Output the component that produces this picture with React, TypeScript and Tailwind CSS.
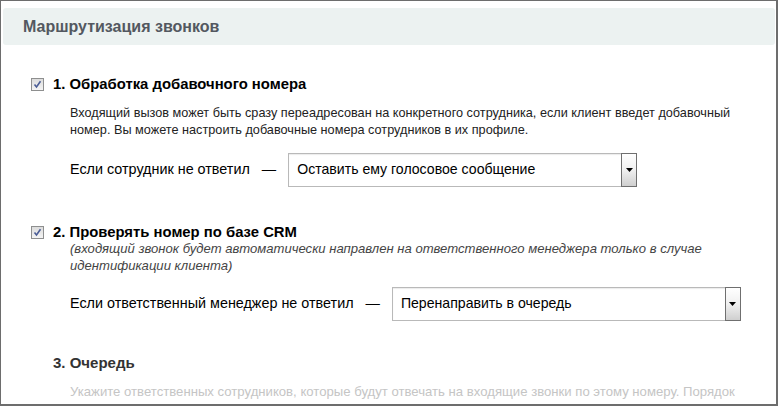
import React from "react";

function Check() {
  return (
    <div className="w-[13px] h-[13px] border border-[#8e8f8f] bg-gradient-to-b from-[#dcdcdc] to-[#f4f4f4] flex items-center justify-center shrink-0">
      <svg width="9" height="9" viewBox="0 0 9 9">
        <path d="M1.5 4.5 L3.5 7 L7.5 1.2" fill="none" stroke="#4b5d96" strokeWidth="1.6" />
      </svg>
    </div>
  );
}

function Select({ text }: { text: string }) {
  return (
    <div className="w-[349px] h-[34px] border border-[#b9b9b9] bg-white flex items-stretch shadow-[inset_0_1px_1px_rgba(0,0,0,0.08)]">
      <div className="flex-1 pl-[8px] flex items-center text-[14.1px] text-black">{text}</div>
      <div className="w-[16px] border border-[#6f6f6f] bg-gradient-to-b from-[#ffffff] via-[#f0f0f0] to-[#cfcfcf] flex items-center justify-center -my-px -mr-px">
        <svg width="7" height="4" viewBox="0 0 7 4">
          <path d="M0 0 H7 L3.5 4 Z" fill="#000" />
        </svg>
      </div>
    </div>
  );
}

export default function App() {
  return (
    <div className="w-[778px] h-[406px] bg-white border-t border-l border-r-2 border-b-2 border-[#6d6d6d] overflow-hidden font-['Liberation_Sans',Arial,sans-serif]">
      <div className="ml-[2px] mr-[1px] mt-[7px] h-[37px] rounded-[3px] bg-[#ecf2f1] flex items-center pl-[20px]">
        <span className="text-[16px] font-bold text-[#535860]">Маршрутизация звонков</span>
      </div>

      <div className="pl-[30px] pt-[31px]">
        <div className="flex items-center gap-[9px] h-[16px]">
          <Check />
          <span className="text-[14.85px] font-bold text-black">1. Обработка добавочного номера</span>
        </div>
        <div className="pl-[39px] pt-[13px] text-[12.7px] leading-[17px] text-[#222] pr-[8px]">
          Входящий вызов может быть сразу переадресован на конкретного сотрудника, если клиент введет добавочный номер. Вы можете настроить добавочные номера сотрудников в их профиле.
        </div>
        <div className="pl-[39px] pt-[14px] flex items-center text-[14.37px] text-black">
          <span>Если сотрудник не ответил</span>
          <span className="ml-[12px] mr-[12px]">—</span>
          <Select text="Оставить ему голосовое сообщение" />
        </div>

        <div className="flex items-center gap-[9px] h-[16px] mt-[37px]">
          <Check />
          <span className="text-[14.85px] font-bold text-black">2. Проверять номер по базе CRM</span>
        </div>
        <div className="pl-[39px] text-[13.1px] italic leading-[17px] text-[#444] pr-[40px]">
          (входящий звонок будет автоматически направлен на ответственного менеджера только в случае идентификации клиента)
        </div>
        <div className="pl-[39px] pt-[13px] flex items-center text-[14.37px] text-black">
          <span>Если ответственный менеджер не ответил</span>
          <span className="ml-[12px] mr-[12px]">—</span>
          <Select text="Перенаправить в очередь" />
        </div>

        <div className="pl-[22px] pt-[34px] h-[16px] flex items-center box-content">
          <span className="text-[15px] font-bold text-[#333]">3. Очередь</span>
        </div>
        <div className="pl-[39px] pt-[12px] text-[13.15px] leading-[17px] text-[#c5c5c5] whitespace-nowrap">
          Укажите ответственных сотрудников, которые будут отвечать на входящие звонки по этому номеру. Порядок
        </div>
      </div>
    </div>
  );
}
